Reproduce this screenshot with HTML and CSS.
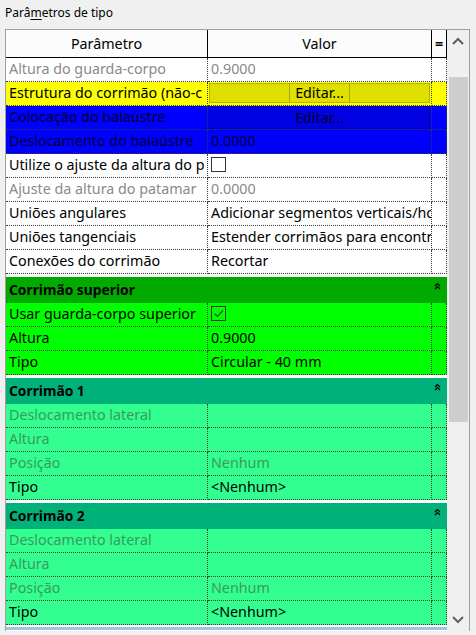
FILE: index.html
```html
<!DOCTYPE html>
<html lang="pt">
<head>
    <meta charset="UTF-8">
    <title>Parâmetros de tipo</title>
<link rel="stylesheet" href="styles.css">
</head>
<body>
    <div class="title">Parâ<u>m</u>etros de tipo</div>
    <div class="panel">
        <div class="grid">
            <div class="row head">
                <div class="cell">Parâmetro</div>
                <div class="cell">Valor</div>
                <div class="cell eq">=</div>
            </div>

            <div class="row">
                <div class="cell dim">Altura do guarda-corpo</div>
                <div class="cell dim">0.9000</div>
                <div class="cell"></div>
            </div>
            <div class="row yellow">
                <div class="cell">Estrutura do corrimão (não-c</div>
                <div class="cell btn-cell"><span class="btn"><span class="btn-label">Editar...</span></span></div>
                <div class="cell"></div>
            </div>
            <div class="row blue">
                <div class="cell">Colocação do balaústre</div>
                <div class="cell btn-cell"><span class="btn"><span class="btn-label plain">Editar...</span></span></div>
                <div class="cell"></div>
            </div>
            <div class="row blue">
                <div class="cell">Deslocamento do balaústre</div>
                <div class="cell">0.0000</div>
                <div class="cell"></div>
            </div>
            <div class="row">
                <div class="cell">Utilize o ajuste da altura do p</div>
                <div class="cell"><span class="check white"></span></div>
                <div class="cell"></div>
            </div>
            <div class="row">
                <div class="cell dim">Ajuste da altura do patamar</div>
                <div class="cell dim">0.0000</div>
                <div class="cell"></div>
            </div>
            <div class="row">
                <div class="cell">Uniões angulares</div>
                <div class="cell">Adicionar segmentos verticais/ho</div>
                <div class="cell"></div>
            </div>
            <div class="row">
                <div class="cell">Uniões tangenciais</div>
                <div class="cell">Estender corrimãos para encontr</div>
                <div class="cell"></div>
            </div>
            <div class="row">
                <div class="cell">Conexões do corrimão</div>
                <div class="cell">Recortar</div>
                <div class="cell"></div>
            </div>

            <div class="group g-top">
                <span>Corrimão superior</span>
                <svg class="collapse" width="7" height="8" viewBox="0 0 7 8"><path d="M1 4 L3.5 1.5 L6 4 M1 7 L3.5 4.5 L6 7" fill="none" stroke="#000" stroke-width="1.2"/></svg>
            </div>
            <div class="row green">
                <div class="cell">Usar guarda-corpo superior</div>
                <div class="cell"><span class="check"><svg width="13" height="13" viewBox="0 0 13 13"><path d="M2.5 6.5 L5.5 9.5 L11 3.5" fill="none" stroke="#1c4a1c" stroke-width="1.2"/></svg></span></div>
                <div class="cell"></div>
            </div>
            <div class="row green">
                <div class="cell">Altura</div>
                <div class="cell">0.9000</div>
                <div class="cell"></div>
            </div>
            <div class="row green">
                <div class="cell">Tipo</div>
                <div class="cell">Circular - 40 mm</div>
                <div class="cell"></div>
            </div>

            <div class="group g-rail">
                <span>Corrimão 1</span>
                <svg class="collapse" width="7" height="8" viewBox="0 0 7 8"><path d="M1 4 L3.5 1.5 L6 4 M1 7 L3.5 4.5 L6 7" fill="none" stroke="#000" stroke-width="1.2"/></svg>
            </div>
            <div class="row mint">
                <div class="cell dim">Deslocamento lateral</div>
                <div class="cell"></div>
                <div class="cell"></div>
            </div>
            <div class="row mint">
                <div class="cell dim">Altura</div>
                <div class="cell"></div>
                <div class="cell"></div>
            </div>
            <div class="row mint">
                <div class="cell dim">Posição</div>
                <div class="cell dim">Nenhum</div>
                <div class="cell"></div>
            </div>
            <div class="row mint">
                <div class="cell">Tipo</div>
                <div class="cell">&lt;Nenhum&gt;</div>
                <div class="cell"></div>
            </div>

            <div class="group g-rail">
                <span>Corrimão 2</span>
                <svg class="collapse" width="7" height="8" viewBox="0 0 7 8"><path d="M1 4 L3.5 1.5 L6 4 M1 7 L3.5 4.5 L6 7" fill="none" stroke="#000" stroke-width="1.2"/></svg>
            </div>
            <div class="row mint">
                <div class="cell dim">Deslocamento lateral</div>
                <div class="cell"></div>
                <div class="cell"></div>
            </div>
            <div class="row mint">
                <div class="cell dim">Altura</div>
                <div class="cell"></div>
                <div class="cell"></div>
            </div>
            <div class="row mint">
                <div class="cell dim">Posição</div>
                <div class="cell dim">Nenhum</div>
                <div class="cell"></div>
            </div>
            <div class="row mint">
                <div class="cell">Tipo</div>
                <div class="cell">&lt;Nenhum&gt;</div>
                <div class="cell"></div>
            </div>
            <div class="bottom-line"></div>
        </div>

        <div class="scrollbar">
            <svg class="arrow" width="22" height="22" viewBox="0 0 22 22"><path d="M6 14 L11 9 L16 14" fill="none" stroke="#606060" stroke-width="2"/></svg>
            <div class="thumb"></div>
            <div class="track-rest"></div>
            <svg class="arrow" width="22" height="22" viewBox="0 0 22 22"><path d="M6 8 L11 13 L16 8" fill="none" stroke="#606060" stroke-width="2"/></svg>
        </div>
    </div>
</body>
</html>
```

FILE: styles.css
```css
body {
    margin: 0;
    background-color: #f0f0f0;
    color: #000;
    font-family: "Noto Sans", "Open Sans", sans-serif;
    font-size: 14.3px;
}
.title {
    height: 29px;
    line-height: 26px;
    padding-left: 5px;
    font-size: 12px;
}
.title u {
    text-underline-offset: 2px;
}

.panel {
    display: flex;
    width: 463px;
    height: 601px;
    margin-left: 5px;
    border: 1px solid #a0a0a0;
    border-bottom: none;
}
.grid {
    width: 441px;
    background-color: #fff;
    overflow: hidden;
}

.row {
    display: grid;
    grid-template-columns: 202px 224px 15px;
    height: 24px;
}
.cell {
    box-sizing: border-box;
    border-right: 1px dotted #3a3a3a;
    border-bottom: 1px dotted #3a3a3a;
    padding-left: 3px;
    line-height: 22px;
    white-space: nowrap;
    overflow: hidden;
}
.dim {
    color: #8a8a8a;
}

.head {
    height: 28px;
    background-color: #fcfcfc;
}
.head .cell {
    border-right: 1px solid #000;
    border-bottom: 1px solid #000;
    line-height: 27px;
    text-align: center;
    padding-left: 0;
}
.head .eq {
    font-weight: bold;
}

.yellow {
    background-color: #ffff00;
}
.blue {
    background-color: #0000ff;
    color: #00002a;
}
.btn-cell {
    padding: 1px;
}
.btn {
    display: flex;
    justify-content: center;
    height: 20px;
    box-sizing: border-box;
    background-color: #e0e000;
    border: 1px solid #b4b400;
}
.btn-label {
    line-height: 18px;
    padding: 0 5px;
    border-left: 1px solid #a8a800;
    border-right: 1px solid #a8a800;
}
.blue .btn {
    background-color: #0000e0;
    border-color: #0000c0;
    height: 22px;
}
.blue .btn-label.plain {
    border: none;
    line-height: 20px;
}

.check {
    display: inline-block;
    width: 15px;
    height: 15px;
    box-sizing: border-box;
    border: 1px solid #333;
    vertical-align: middle;
    margin-top: -3px;
}
.check.white {
    background-color: #fff;
}
.check svg {
    display: block;
}

.group {
    display: flex;
    justify-content: space-between;
    height: 26px;
    margin-top: 3px;
    padding-left: 3px;
    line-height: 25px;
    font-size: 13.8px;
    font-weight: bold;
}
.collapse {
    margin: 5px 6px 0 0;
}
.g-top {
    background-color: #00aa00;
}
.green {
    background-color: #00ff00;
}
.g-rail {
    background-color: #00b27a;
}
.mint {
    background-color: #33ff91;
}
.mint .dim {
    color: #3a9a5e;
}

.bottom-line {
    height: 3px;
    margin-top: 2px;
    background-color: #a6c2de;
}

.scrollbar {
    display: flex;
    flex-direction: column;
    width: 22px;
    background-color: #f0f0f0;
}
.arrow {
    display: block;
}
.thumb {
    height: 345px;
    margin: 25px 1px 0 2px;
    background-color: #cdcdcd;
}
.track-rest {
    flex: 1;
}
```
